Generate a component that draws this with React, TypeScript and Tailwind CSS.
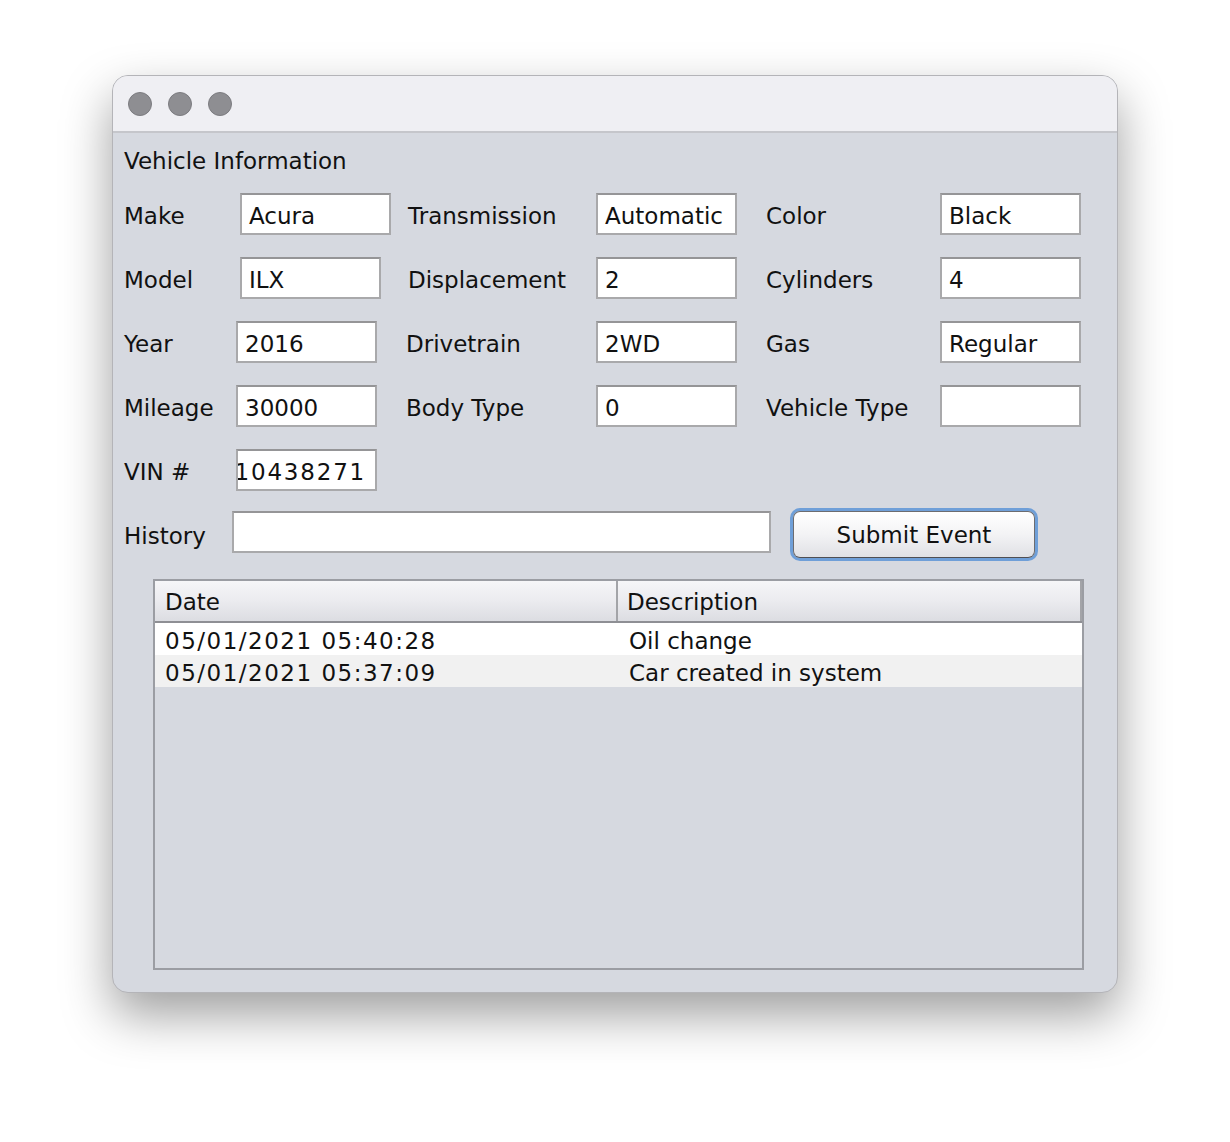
const font = { fontFamily: '"DejaVu Sans", "Liberation Sans", sans-serif' };

function Field({ value, w = "w-[141px]" }: { value: string; w?: string }) {
  return (
    <div
      className={`${w} h-[42px] shrink-0 border-2 border-[#a9a9ab] border-t-[#959597] bg-white pl-[7px] pt-[4px] flex items-center overflow-hidden whitespace-nowrap`}
    >
      {value}
    </div>
  );
}

function Label({ text, w, ml = "" }: { text: string; w: string; ml?: string }) {
  return <div className={`${w} ${ml} shrink-0 pt-[4px] whitespace-nowrap`}>{text}</div>;
}

const rows = [
  { date: "05/01/2021 05:40:28", desc: "Oil change" },
  { date: "05/01/2021 05:37:09", desc: "Car created in system" },
];

export default function App() {
  return (
    <div className="min-h-[1142px] w-[1230px] bg-white pt-[75px] pl-[112px]" style={font}>
      <div className="w-[1006px] h-[918px] rounded-[16px] overflow-hidden border border-[#b4b4b8] bg-[#d6d9e0] shadow-[0_22px_50px_rgba(0,0,0,0.38)] flex flex-col text-[23px] text-[#111]">
        {/* title bar */}
        <div className="h-[57px] shrink-0 bg-[#efeff3] border-b-2 border-[#c5c6cb] flex items-center gap-[16px] pl-[15px]">
          <div className="w-[24px] h-[24px] rounded-full bg-[#8e8e92] border border-[#7c7c80]" />
          <div className="w-[24px] h-[24px] rounded-full bg-[#8e8e92] border border-[#7c7c80]" />
          <div className="w-[24px] h-[24px] rounded-full bg-[#8e8e92] border border-[#7c7c80]" />
        </div>

        <div className="flex flex-col pl-[11px]">
          <div className="h-[28px] mt-[14px] leading-[28px]">Vehicle Information</div>

          <div className="flex flex-col gap-[22px] mt-[18px]">
            <div className="flex items-center">
              <Label text="Make" w="w-[116px]" />
              <Field value="Acura" w="w-[151px]" />
              <Label text="Transmission" w="w-[188px]" ml="ml-[17px]" />
              <Field value="Automatic" />
              <Label text="Color" w="w-[174px]" ml="ml-[29px]" />
              <Field value="Black" />
            </div>
            <div className="flex items-center">
              <Label text="Model" w="w-[116px]" />
              <Field value="ILX" />
              <Label text="Displacement" w="w-[188px]" ml="ml-[27px]" />
              <Field value="2" />
              <Label text="Cylinders" w="w-[174px]" ml="ml-[29px]" />
              <Field value="4" />
            </div>
            <div className="flex items-center">
              <Label text="Year" w="w-[112px]" />
              <Field value="2016" />
              <Label text="Drivetrain" w="w-[190px]" ml="ml-[29px]" />
              <Field value="2WD" />
              <Label text="Gas" w="w-[174px]" ml="ml-[29px]" />
              <Field value="Regular" />
            </div>
            <div className="flex items-center">
              <Label text="Mileage" w="w-[112px]" />
              <Field value="30000" />
              <Label text="Body Type" w="w-[190px]" ml="ml-[29px]" />
              <Field value="0" />
              <Label text="Vehicle Type" w="w-[174px]" ml="ml-[29px]" />
              <Field value="" />
            </div>
            <div className="flex items-center">
              <Label text="VIN #" w="w-[112px]" />
              <div className="w-[141px] h-[42px] shrink-0 border-2 border-[#a9a9ab] border-t-[#959597] bg-white pt-[4px] flex items-center justify-end pr-[9px] overflow-hidden whitespace-nowrap tracking-[1.8px]">
                10438271
              </div>
            </div>
          </div>

          {/* history row */}
          <div className="flex items-start mt-[17px] h-[53px]">
            <div className="w-[108px] shrink-0 h-[53px] flex items-center pt-[3px]">History</div>
            <div className="w-[539px] h-[42px] mt-[3px] shrink-0 border-2 border-[#a9a9ab] border-t-[#959597] bg-white" />
            <div className="ml-[19px] w-[248px] h-[53px] shrink-0 rounded-[10px] border-[3px] border-[#6f9fd8]">
              <div className="w-full h-full rounded-[7px] border border-[#6c6c70] border-b-[#4f4f53] bg-gradient-to-b from-[#ffffff] via-[#f3f3f5] to-[#e0e1e5] flex items-center justify-center pt-[2px] text-[23px] text-[#111]">
                Submit Event
              </div>
            </div>
          </div>

          {/* table */}
          <div className="ml-[29px] mt-[18px] w-[931px] h-[391px] border-2 border-[#9b9da3] flex flex-col">
            <div className="h-[42px] shrink-0 flex border-b-2 border-[#8e8f94] bg-gradient-to-b from-[#f6f6f8] via-[#ebebef] to-[#dcdde2]">
              <div className="w-[463px] h-full border-r-2 border-[#a3a4a8] pl-[10px] pt-[2px] flex items-center">Date</div>
              <div className="flex-1 h-full border-r-2 border-[#a3a4a8] pl-[9px] pt-[2px] flex items-center">Description</div>
            </div>
            {rows.map((r, i) => (
              <div
                key={r.date}
                className={`h-[32px] shrink-0 flex items-center pt-[4px] ${i % 2 === 0 ? "bg-white" : "bg-[#f1f1f1]"}`}
              >
                <div className="w-[465px] pl-[10px] tracking-[1.5px]">{r.date}</div>
                <div className="pl-[9px]">{r.desc}</div>
              </div>
            ))}
            <div className="flex-1 bg-[#d6d9e0]" />
          </div>
        </div>
      </div>
    </div>
  );
}
